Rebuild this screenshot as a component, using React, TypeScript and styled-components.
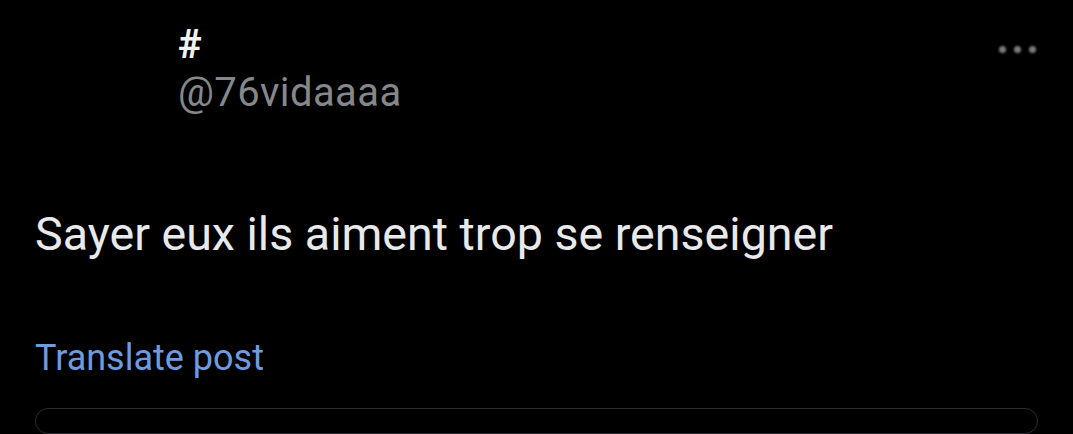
import React from "react";
import styled, { createGlobalStyle } from "styled-components";

const Global = createGlobalStyle`
  html, body { margin: 0; padding: 0; background: #000; }
  body { font-family: "Roboto", "Liberation Sans", sans-serif; }
`;

const Page = styled.div`
  width: 1073px;
  height: 434px;
  background: #000;
  overflow: hidden;
  display: flex;
  flex-direction: column;
  padding: 0 35px;
  box-sizing: border-box;
`;

const Header = styled.div`
  display: flex;
  justify-content: space-between;
  align-items: flex-start;
  padding-left: 143px;
  padding-top: 23px;
`;

const Names = styled.div`
  display: flex;
  flex-direction: column;
`;

const DisplayName = styled.div`
  color: #f2f2f2;
  font-weight: 700;
  font-size: 40px;
  line-height: 44px;
`;

const Handle = styled.div`
  color: #85888b;
  font-size: 40px;
  letter-spacing: 0.4px;
  line-height: 48px;
  margin-top: 2px;
`;

const More = styled.div`
  display: flex;
  gap: 8px;
  margin-top: 23px;
  margin-right: 2px;
`;

const Dot = styled.span`
  width: 7px;
  height: 7px;
  border-radius: 50%;
  background: #7c7c7c;
  filter: blur(0.8px);
`;

const Body = styled.div`
  color: #e7e9ea;
  font-size: 46.6px;
  line-height: 60px;
  margin-top: 87px;
`;

const Translate = styled.div`
  color: #6e9be0;
  font-size: 36px;
  line-height: 44px;
  margin-top: 72px;
`;

const Card = styled.div`
  margin-top: 28px;
  height: 80px;
  border: 1.5px solid #2b2d30;
  border-radius: 26px;
`;

export default function App() {
  return (
    <>
      <Global />
      <Page>
        <Header>
          <Names>
            <DisplayName>#</DisplayName>
            <Handle>@76vidaaaa</Handle>
          </Names>
          <More>
            <Dot />
            <Dot />
            <Dot />
          </More>
        </Header>
        <Body>Sayer eux ils aiment trop se renseigner</Body>
        <Translate>Translate post</Translate>
        <Card />
      </Page>
    </>
  );
}
